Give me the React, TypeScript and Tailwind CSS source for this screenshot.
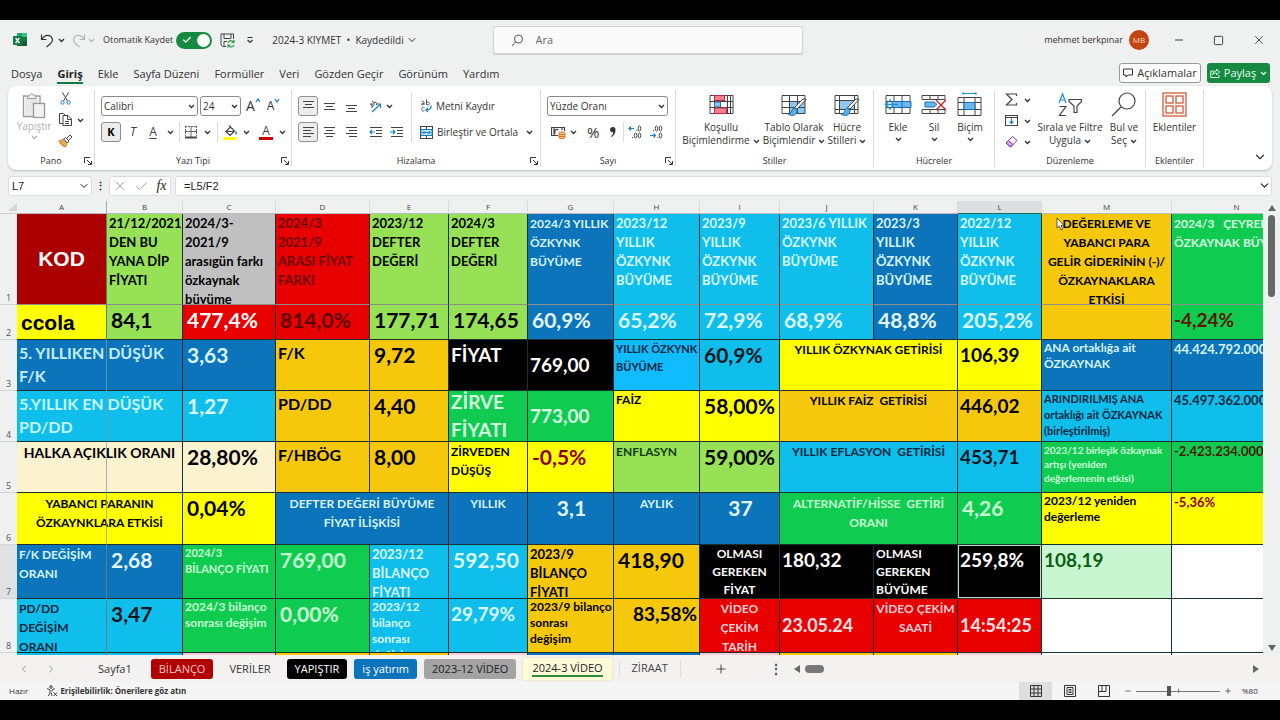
import type { ReactNode } from 'react'
import clsx from 'clsx'
import { ChevronDown, ChevronLeft, ChevronRight, Check, X, Minus, Plus, Square } from 'lucide-react'

/* ---------- sheet data ---------- */

interface Cell {
  t?:    string
  bg:    string
  c?:    string
  span?: number
}

interface Row {
  n:     number
  h:     string
  line?: string
  cells: Cell[]
}

// Fills
const LIME   = 'bg-[#96e155]'
const BLUE   = 'bg-[#0b74ba]'
const CYAN   = 'bg-[#10beec]'
const GOLD   = 'bg-[#f6c80c]'
const YELLOW = 'bg-[#ffff00]'
const GREEN  = 'bg-[#0fcc50]'
const RED    = 'bg-[#e80000]'
const BLACK  = 'bg-black'
const PINK   = 'bg-[#f3ccd5]'
const WHITE  = 'bg-white'

// Text sizes
const HEAD  = 'text-[13px] leading-[19px]'
const CAPS  = 'text-[12px] leading-[19px]'
const MID   = 'text-[12px] leading-[18px]'
const NOTE  = 'text-[12px] leading-[16px]'
const NOTE2 = 'text-[11px] leading-[16px]'
const TINY  = 'text-[10px] leading-[14px] pt-px'
const BIG   = 'text-[16px] leading-[23px] pt-px'
const NUM   = 'text-[21px] leading-[26px] pt-[2px] pl-1'
const NUM2  = 'text-[19px] leading-[24px] pt-[3px]'
const MIDV  = 'flex items-center'

const COLS = [
  ['A', 'w-[90px]'], ['B', 'w-[76px]'], ['C', 'w-[93px]'], ['D', 'w-[94px]'], ['E', 'w-[79px]'],
  ['F', 'w-[79px]'], ['G', 'w-[86px]'], ['H', 'w-[86px]'], ['I', 'w-[80px]'], ['J', 'w-[94px]'],
  ['K', 'w-[84px]'], ['L', 'w-[84px]'], ['M', 'w-[130px]'], ['N', 'w-[130px]'],
]

const ROWS: Row[] = [
  {
    n: 1, h: 'h-[90px]', line: 'border-b-[#8a8f8a]',
    cells: [
      { t: 'KOD', bg: 'bg-[#aa0000]', c: 'flex items-center justify-center font-[Liberation_Sans,sans-serif] text-[21px] text-white' },
      { t: '21/12/2021\nDEN BU\nYANA DİP\nFİYATI', bg: LIME, c: HEAD },
      { t: '2024/3-\n2021/9\narasıgün farkı\nözkaynak\nbüyüme', bg: 'bg-[#c0c0c0]', c: HEAD },
      { t: '2024/3\n2021/9\nARASI FİYAT\nFARKI', bg: RED, c: `${HEAD} text-[#6a0000]` },
      { t: '2023/12\nDEFTER\nDEĞERİ', bg: LIME, c: HEAD },
      { t: '2024/3\nDEFTER\nDEĞERİ', bg: LIME, c: HEAD },
      { t: '2024/3 YILLIK\nÖZKYNK\nBÜYÜME', bg: BLUE, c: `${CAPS} text-[#d8f4ff]` },
      { t: '2023/12\nYILLIK\nÖZKYNK\nBÜYÜME', bg: CYAN, c: `${HEAD} text-[#d8faff]` },
      { t: '2023/9\nYILLIK\nÖZKYNK\nBÜYÜME', bg: CYAN, c: `${HEAD} text-[#d8faff]` },
      { t: '2023/6 YILLIK\nÖZKYNK\nBÜYÜME', bg: CYAN, c: `${HEAD} text-[#d8faff]` },
      { t: '2023/3\nYILLIK\nÖZKYNK\nBÜYÜME', bg: BLUE, c: `${HEAD} text-[#d8f4ff]` },
      { t: '2022/12\nYILLIK\nÖZKYNK\nBÜYÜME', bg: CYAN, c: `${HEAD} text-[#d8faff]` },
      { t: 'DEĞERLEME VE\nYABANCI PARA\nGELİR GİDERİNİN (-)/\nÖZKAYNAKLARA\nETKİSİ', bg: GOLD, c: `${CAPS} text-center` },
      { t: '2024/3   ÇEYREK\nÖZKAYNAK BÜYÜME', bg: GREEN, c: `${CAPS} text-[#d8ffe0]` },
    ],
  },
  {
    n: 2, h: 'h-[34px]',
    cells: [
      { t: 'ccola', bg: YELLOW, c: 'flex items-center pl-1 pt-[2px] font-[Liberation_Sans,sans-serif] text-[21px]' },
      { t: '84,1', bg: LIME, c: NUM },
      { t: '477,4%', bg: RED, c: `${NUM} text-white` },
      { t: '814,0%', bg: RED, c: `${NUM} text-[#5a0000]` },
      { t: '177,71', bg: LIME, c: NUM },
      { t: '174,65', bg: LIME, c: NUM },
      { t: '60,9%', bg: BLUE, c: `${NUM} text-[#e4f8ff]` },
      { t: '65,2%', bg: CYAN, c: `${NUM} text-[#dcfaff]` },
      { t: '72,9%', bg: CYAN, c: `${NUM} text-[#dcfaff]` },
      { t: '68,9%', bg: CYAN, c: `${NUM} text-[#dcfaff]` },
      { t: '48,8%', bg: BLUE, c: `${NUM} text-[#e4f8ff]` },
      { t: '205,2%', bg: CYAN, c: `${NUM} text-[#dcfaff]` },
      { bg: GOLD },
      { t: '-4,24%', bg: GREEN, c: `${NUM2} text-[#5a1a00]` },
    ],
  },
  {
    n: 3, h: 'h-[50px]',
    cells: [
      { t: '5. YILLIKEN DÜŞÜK\nF/K', bg: BLUE, span: 2, c: `${BIG} text-[#c4ecff]` },
      { t: '3,63', bg: BLUE, c: `${NUM} text-[#d8f4ff]` },
      { t: 'F/K', bg: GOLD, c: BIG },
      { t: '9,72', bg: GOLD, c: NUM },
      { t: 'FİYAT', bg: BLACK, c: 'text-[19px] leading-[28px] pt-px text-white' },
      { t: '769,00', bg: BLACK, c: `text-[19px] ${MIDV} text-white` },
      { t: 'YILLIK ÖZKYNK\nBÜYÜME', bg: 'bg-[#10bbff]', c: 'text-[11px] leading-[18px] text-[#04263c]' },
      { t: '60,9%', bg: CYAN, c: `${NUM} text-[#04161c]` },
      { t: 'YILLIK ÖZKYNAK GETİRİSİ', bg: YELLOW, span: 2, c: `${CAPS} text-center` },
      { t: '106,39', bg: YELLOW, c: NUM2 },
      { t: 'ANA ortaklığa ait\nÖZKAYNAK', bg: BLUE, c: `${NOTE} text-[#d8f4ff]` },
      { t: '44.424.792.000', bg: BLUE, c: `${HEAD} text-[#d8f4ff]` },
    ],
  },
  {
    n: 4, h: 'h-[50px]',
    cells: [
      { t: '5.YILLIK EN DÜŞÜK\nPD/DD', bg: CYAN, span: 2, c: `${BIG} text-[#c4f6ff]` },
      { t: '1,27', bg: CYAN, c: `${NUM} text-[#d8faff]` },
      { t: 'PD/DD', bg: GOLD, c: BIG },
      { t: '4,40', bg: GOLD, c: NUM },
      { t: 'ZİRVE\nFİYATI', bg: GREEN, c: `text-[19px] leading-[28px] ${MIDV} text-[#d8ffe0]` },
      { t: '773,00', bg: GREEN, c: `text-[19px] ${MIDV} text-[#d8ffe0]` },
      { t: 'FAİZ', bg: YELLOW, c: MID },
      { t: '58,00%', bg: YELLOW, c: NUM },
      { t: 'YILLIK FAİZ  GETİRİSİ', bg: GOLD, span: 2, c: `${CAPS} text-center` },
      { t: '446,02', bg: GOLD, c: NUM2 },
      { t: 'ARINDIRILMIŞ ANA\nortaklığı ait ÖZKAYNAK\n(birleştirilmiş)', bg: CYAN, c: `${NOTE2} text-[#04263c]` },
      { t: '45.497.362.000', bg: CYAN, c: `${HEAD} text-[#04263c]` },
    ],
  },
  {
    n: 5, h: 'h-[50px]',
    cells: [
      { t: 'HALKA AÇIKLIK ORANI', bg: 'bg-[#fbf2d0]', span: 2, c: 'text-[14px] leading-[22px] text-center' },
      { t: '28,80%', bg: 'bg-[#fbf2d0]', c: NUM },
      { t: 'F/HBÖG', bg: GOLD, c: BIG },
      { t: '8,00', bg: GOLD, c: NUM },
      { t: 'ZİRVEDEN\nDÜŞÜŞ', bg: YELLOW, c: CAPS },
      { t: '-0,5%', bg: YELLOW, c: `${NUM} text-[#8a0000]` },
      { t: 'ENFLASYN', bg: LIME, c: `${CAPS} text-[#123a12]` },
      { t: '59,00%', bg: LIME, c: NUM },
      { t: 'YILLIK EFLASYON  GETİRİSİ', bg: CYAN, span: 2, c: `${CAPS} text-center text-[#04263c]` },
      { t: '453,71', bg: CYAN, c: `${NUM2} text-[#04161c]` },
      { t: '2023/12 birleşik özkaynak\nartışı (yeniden\ndeğerlemenin etkisi)', bg: GREEN, c: `${TINY} text-[#d0ffdc]` },
      { t: '-2.423.234.000', bg: GREEN, c: `${HEAD} text-[#4a1a00]` },
    ],
  },
  {
    n: 6, h: 'h-[51px]',
    cells: [
      { t: 'YABANCI PARANIN\nÖZKAYNKLARA ETKİSİ', bg: YELLOW, span: 2, c: `${CAPS} pt-px text-center` },
      { t: '0,04%', bg: YELLOW, c: NUM },
      { t: 'DEFTER DEĞERİ BÜYÜME\nFİYAT İLİŞKİSİ', bg: BLUE, span: 2, c: `${CAPS} pt-px text-center text-[#d8f4ff]` },
      { t: 'YILLIK', bg: BLUE, c: `${CAPS} pt-px text-center text-[#d8f4ff]` },
      { t: '3,1', bg: BLUE, c: `${NUM} text-center text-[#e4f8ff]` },
      { t: 'AYLIK', bg: BLUE, c: `${CAPS} pt-px text-center text-[#d8f4ff]` },
      { t: '37', bg: BLUE, c: `${NUM} text-center text-[#e4f8ff]` },
      { t: 'ALTERNATİF/HİSSE  GETİRİ\nORANI', bg: GREEN, span: 2, c: `${CAPS} pt-px text-center text-[#c8ffd4]` },
      { t: '4,26', bg: GREEN, c: `${NUM} text-[#c8ffd4]` },
      { t: '2023/12 yeniden\ndeğerleme', bg: YELLOW, c: NOTE },
      { t: '-5,36%', bg: YELLOW, c: `${HEAD} text-[#8a0000]` },
    ],
  },
  {
    n: 7, h: 'h-[53px]',
    cells: [
      { t: 'F/K DEĞİŞİM\nORANI', bg: BLUE, c: `${CAPS} text-[#d8f4ff]` },
      { t: '2,68', bg: BLUE, c: `${NUM} text-[#e4f8ff]` },
      { t: '2024/3\nBİLANÇO FİYATI', bg: GREEN, c: `${NOTE2} text-[#c8ffd4]` },
      { t: '769,00', bg: GREEN, c: `${NUM} text-[#c8ffd4]` },
      { t: '2023/12\nBİLANÇO\nFİYATI', bg: CYAN, c: `${HEAD} text-[#d8faff]` },
      { t: '592,50', bg: CYAN, c: `${NUM} text-[#dcfaff]` },
      { t: '2023/9\nBİLANÇO\nFİYATI', bg: GOLD, c: HEAD },
      { t: '418,90', bg: GOLD, c: NUM },
      { t: 'OLMASI\nGEREKEN\nFİYAT', bg: BLACK, c: `${MID} text-center text-white` },
      { t: '180,32', bg: BLACK, c: `${NUM2} text-white` },
      { t: 'OLMASI\nGEREKEN\nBÜYÜME', bg: BLACK, c: `${MID} text-white` },
      { t: '259,8%', bg: BLACK, c: `${NUM2} text-white` },
      { t: '108,19', bg: 'bg-[#c8f6d0]', c: `${NUM2} text-[#0a6010]` },
      { bg: WHITE },
    ],
  },
  {
    n: 8, h: 'h-[53px]',
    cells: [
      { t: 'PD/DD\nDEĞİŞİM\nORANI', bg: CYAN, c: `${CAPS} text-[#04263c]` },
      { t: '3,47', bg: CYAN, c: `${NUM} text-[#04161c]` },
      { t: '2024/3 bilanço\nsonrası değişim', bg: GREEN, c: `${NOTE} text-[#c8ffd4]` },
      { t: '0,00%', bg: GREEN, c: `${NUM} text-[#c8ffd4]` },
      { t: '2023/12\nbilanço\nsonrası\ndeğişim', bg: CYAN, c: `${NOTE} text-[#d8faff]` },
      { t: '29,79%', bg: CYAN, c: `${NUM2} text-[#d8faff]` },
      { t: '2023/9 bilanço\nsonrası\ndeğişim', bg: GOLD, c: NOTE },
      { t: '83,58%', bg: GOLD, c: `${NUM2} text-right` },
      { t: 'VİDEO\nÇEKİM\nTARİH', bg: RED, c: `${CAPS} text-center text-[#ffd0d8]` },
      { t: '23.05.24', bg: RED, c: `text-[18px] ${MIDV} text-[#ffe0e4]` },
      { t: 'VİDEO ÇEKİM\nSAATİ', bg: RED, c: `${CAPS} text-center text-[#ffd0d8]` },
      { t: '14:54:25', bg: RED, c: `text-[18px] ${MIDV} text-[#ffe0e4]` },
      { bg: WHITE },
      { bg: WHITE },
    ],
  },
  {
    n: 9, h: 'h-[20px]',
    cells: [CYAN, CYAN, PINK, GOLD, GOLD, PINK, BLUE, BLUE, PINK, GOLD, GOLD, PINK, WHITE, WHITE].map(bg => ({ bg })),
  },
]

const SHEETS = [
  { name: 'Sayfa1',        c: 'px-3 text-[#333]' },
  { name: 'BİLANÇO',       c: 'px-2 bg-[#b00000] text-[#ffc8c8]' },
  { name: 'VERİLER',       c: 'px-[9px] text-[#333]' },
  { name: 'YAPIŞTIR',      c: 'px-2 bg-black text-white' },
  { name: 'iş yatırım',    c: 'px-2 bg-[#0b74ba] text-white' },
  { name: '2023-12 VİDEO', c: 'px-2 bg-[#a3a3a3] text-[#222]' },
]

/* ---------- icons ---------- */

function Svg({ w, h, children }: { w: number; h: number; children: ReactNode }) {
  return (
    <svg width={w} height={h} viewBox={`0 0 ${w} ${h}`} fill="none" stroke="#444" strokeWidth="1" className="shrink-0">
      {children}
    </svg>
  )
}

const Down = ({ c = 'text-[#333]' }: { c?: string }) => (
  <svg width="7" height="8" viewBox="0 0 7 8" fill="none" stroke="currentColor" strokeWidth="1.300" className={`shrink-0 ${c}`}>
    <path d="M1 3l2.500 2.500L6 3" />
  </svg>
)

const ExcelIcon = () => (
  <svg width="15" height="14" viewBox="0 0 15 14">
    <rect x="4" y="0" width="10" height="13" rx="1" fill="#21a366" />
    <path d="M9 0h4a1 1 0 0 1 1 1v3H9z" fill="#33c481" />
    <path d="M4 7h10v5a1 1 0 0 1-1 1H5a1 1 0 0 1-1-1z" fill="#185c37" />
    <path d="M9 4h5v4H9z" fill="#107c41" />
    <rect x="0" y="3" width="9" height="9" rx="1" fill="#0f7a3d" />
    <path d="M2.600 5l3.800 5M6.400 5L2.600 10" stroke="#fff" strokeWidth="1.300" />
  </svg>
)

const UndoIcon = () => (
  <Svg w={14} h={15}><path d="M1.500 1.500v5h5M1.800 6.200C4 2.500 8 1.300 10.800 3.500c2.500 2.200 2 5-.2 7L6.500 14" strokeWidth="1.200" stroke="#333" /></Svg>
)

const RedoIcon = () => (
  <Svg w={14} h={15}><path d="M12.500 1.500v5h-5M12.200 6.200C10 2.500 6 1.300 3.200 3.500c-2.500 2.200-2 5 .2 7L7.500 14" strokeWidth="1.200" stroke="#b5b5b5" /></Svg>
)

const SaveIcon = () => (
  <Svg w={15} h={15}>
    <path d="M6 13.500H2.500L1 12V1h12.500v5M4 1v4.500h7V1M4 13.500V8.500h3" />
    <path d="M8 10a3 3 0 0 1 5.500-1M14 7v2.500h-2.500M14 11.500a3 3 0 0 1-5.500 1M8 14.500V12h2.500" stroke="#2a9d4a" strokeWidth="1.200" />
  </Svg>
)

const PasteIcon = () => (
  <Svg w={24} h={26}>
    <path d="M3 5h13v6h-5v11H3z" fill="#e8e8e8" stroke="none" />
    <path d="M5 3H1.500v20.500H11M14 3h4v7" stroke="#999" strokeWidth="1.300" />
    <path d="M5.500 5.500V2.800h2.200a2 2 0 0 1 4 0h2.200v2.700z" fill="#f4f4f4" stroke="#999" />
    <rect x="11.500" y="10.500" width="11" height="14" fill="#f2f2f2" stroke="#999" strokeWidth="1.300" />
  </Svg>
)

const CutIcon = () => (
  <Svg w={11} h={13}>
    <path d="M2.500 0.500l5 8.500M8.500 0.500l-5 8.500" />
    <circle cx="2.500" cy="10.500" r="1.700" stroke="#1a7fc4" /><circle cx="8.500" cy="10.500" r="1.700" stroke="#1a7fc4" />
  </Svg>
)

const CopyIcon = () => (
  <Svg w={15} h={15}>
    <path d="M5 11.500H1.500V1.500h4l1.500 1.500M5 3.500h5l3.500 3.500v6.500H5zM9.500 3.500V7.500h4M7 9.500h4M7 11.500h4" />
  </Svg>
)

const BrushIcon = () => (
  <Svg w={15} h={14}>
    <path d="M1 7l4-1.500 4 4L7.500 13C5 12.500 2 10 1 7z" fill="#f2b266" stroke="#d07a1c" />
    <path d="M5.500 5l2-1.500L11 7 9.500 9zM8.500 4.500L12 1l2 2-3.500 3.500" />
    <path d="M3 9l2-1M5 11l1.500-1.500" stroke="#d07a1c" />
  </Svg>
)

const GlyphA = ({ up }: { up: boolean }) => (
  <span className="flex items-start text-[#333]">
    <span className={up ? 'text-[14px] leading-[16px]' : 'text-[12px] leading-[16px]'}>A</span>
    <svg width="6" height="5" viewBox="0 0 6 5" fill="none" stroke="#1a7fc4" strokeWidth="1.200">
      <path d={up ? 'M1 4l2-3 2 3' : 'M1 1l2 3 2-3'} />
    </svg>
  </span>
)

const BordersIcon = () => (
  <Svg w={14} h={14}>
    <path d="M1 1.500h12M1.500 1v10M12.500 1v10" strokeDasharray="2 1" stroke="#666" />
    <path d="M7 1v11M1 6.500h12" stroke="#666" />
    <path d="M1 12.500h12" strokeWidth="2" />
  </Svg>
)

const FillIcon = () => (
  <Svg w={15} h={15}>
    <path d="M3 6.500L7.500 2l4 4-4.500 4.500zM7.500 2L6 0.500M3.500 6.500h7.500" strokeWidth="1.200" />
    <path d="M12.500 6.500c1 1.500 1.200 2.200.3 2.800" stroke="#1a7fc4" strokeWidth="1.400" />
    <rect x="0.500" y="12" width="13" height="3" fill="#ffff00" stroke="none" />
  </Svg>
)

// Horizontal rules as [x1, x2, y]
function Lines({ rows }: { rows: [number, number, number][] }) {
  return (
    <Svg w={13} h={13}>
      {rows.map(([x1, x2, y]) => <path key={y} d={`M${x1} ${y + 0.5}h${x2 - x1}`} />)}
    </Svg>
  )
}

const OrientIcon = () => (
  <Svg w={14} h={13}>
    <path d="M3 7a1.600 1.600 0 1 0-.5-2.500M4.500 6.500L2.500 3.500M6.500 4.500L4 .8M6 3a1.500 1.500 0 1 1 2 2" />
    <path d="M4 12l8.500-8M12.500 8V4H9" stroke="#1a7fc4" strokeWidth="1.200" />
  </Svg>
)

function IndentIcon({ right }: { right?: boolean }) {
  return (
    <Svg w={13} h={13}>
      <path d="M1 1.500h12M7 4.500h6M7 7.500h6M1 10.500h12" />
      <path d={right ? 'M0 6h5M3 4l2 2-2 2' : 'M6 6H1M3 4L1 6l2 2'} stroke="#1a7fc4" strokeWidth="1.200" />
    </Svg>
  )
}

const WrapIcon = () => (
  <svg width="12" height="14" viewBox="0 0 12 14" fill="none" stroke="#555">
    <path d="M1.500 2.500c1.500-.8 2.500 0 2.500 1v2.500M4 4.500c-2-.2-3 .3-2.500 1.200.5.7 2 .4 2.500-.5M6.500.5V6M6.500 4a1.500 1.500 0 1 1 0 1M4.500 9C3 8 1.300 9 1.500 10.500s2 2 3 1" />
    <path d="M11 6.500c.5 3-1 4.500-5 4.500M8 9l-2 2 2 2" stroke="#1a7fc4" strokeWidth="1.200" />
  </svg>
)

const MergeIcon = () => (
  <Svg w={13} h={13}>
    <rect x="0.500" y="0.500" width="12" height="12" />
    <rect x="1" y="3.500" width="11" height="6" fill="#bfe2f8" stroke="#1a7fc4" />
    <path d="M6.500 .5v3M6.500 9.500v3" /><path d="M2.500 6.500h8M4.500 5L3 6.500 4.500 8M8.500 5L10 6.500 8.500 8" stroke="#1a7fc4" />
  </Svg>
)

const MoneyIcon = () => (
  <Svg w={15} h={13}>
    <path d="M7 9.500H.5v-8h13V5M3 1.500v8M4.500 7.500a2 2 0 1 1 3-3.500M11 1.500V4" strokeWidth="1.200" />
    <rect x="8" y="6" width="6" height="6.500" rx="1.500" fill="#f8c48a" stroke="#d8741c" /><path d="M8 8.500h6M8 10.500h6" stroke="#d8741c" />
  </Svg>
)

function DecimalIcon({ inc }: { inc?: boolean }) {
  return (
    <svg width="15" height="14" viewBox="0 0 15 14" fill="none" stroke="#444">
      <path d={inc ? 'M6 3.500H1M3 1.500l-2 2 2 2' : 'M1 10.500h5.500M4.500 8.500l2 2-2 2'} stroke="#1a7fc4" strokeWidth="1.200" />
      {inc
        ? <><ellipse cx="11.500" cy="3.500" rx="1.300" ry="2.500" /><ellipse cx="7.500" cy="10.500" rx="1.300" ry="2.500" /><ellipse cx="11.500" cy="10.500" rx="1.300" ry="2.500" /></>
        : <><ellipse cx="7.500" cy="3.500" rx="1.300" ry="2.500" /><ellipse cx="11.500" cy="3.500" rx="1.300" ry="2.500" /><ellipse cx="11.500" cy="10.500" rx="1.300" ry="2.500" /></>}
      <path d={inc ? 'M4 12.500h1M8.500 5.500h1' : 'M4 5.500h1M8.500 12.500h1'} />
    </svg>
  )
}

const CondIcon = () => (
  <Svg w={25} h={25}>
    <path d="M1 3.500h23v18H1zM1 9.500h23M1 15.500h23M5.500 3.500v18M18.500 3.500v18M21.500 3.500v18" />
    <rect x="5.500" y="3.500" width="10" height="5" fill="#f4808e" stroke="#c8283c" />
    <rect x="5.500" y="10" width="6" height="5" fill="#8cc4ec" stroke="#2a6cb0" />
    <rect x="5.500" y="16" width="12" height="5.500" fill="#f4808e" stroke="#c8283c" />
  </Svg>
)

const TableFmtIcon = () => (
  <Svg w={26} h={25}>
    <path d="M8 9.500h16v12H8z" fill="#8cc8f2" stroke="none" />
    <path d="M1 3.500h23v18H1zM1 9.500h23M1 15.500h23M8.500 3.500v18M16.500 3.500v18" />
    <path d="M25 7.500L16 17l-2.500-1.500L22 7z" fill="#fff" />
    <path d="M13.500 16c-3 .5-2 4.500-6 6.500 4 2 9 .5 8.500-4z" fill="#5ab0ea" stroke="#1a6cb0" />
  </Svg>
)

const CellStyleIcon = () => (
  <Svg w={26} h={25}>
    <path d="M5 8.500h16v9H5z" fill="#8cc8f2" stroke="none" />
    <path d="M1 3.500h23v18H1zM1 8.500h23M1 17.500h23M5.500 3.500v18M20.500 3.500v18" />
    <path d="M25 7.500L16 17l-2.500-1.500L22 7z" fill="#fff" />
    <path d="M13.500 16c-3 .5-2 4.500-6 6.500 4 2 9 .5 8.500-4z" fill="#5ab0ea" stroke="#1a6cb0" />
  </Svg>
)

const InsertIcon = () => (
  <Svg w={28} h={25}>
    <path d="M2 3.500h24v18H2zM2 9.500h24M2 15.500h24M10 3.500v18M18 3.500v18" />
    <path d="M8 9.500h19v6H8z" fill="#6cb8ee" stroke="#1a6cb0" /><path d="M18 9.500v6" stroke="#1a6cb0" />
    <path d="M14 12.500H1.500M7 7.500l-5.500 5 5.500 5" stroke="#1a8fd4" strokeWidth="1.300" />
  </Svg>
)

const DeleteIcon = () => (
  <Svg w={26} h={25}>
    <path d="M1 3.500h23v4M1 3.500v4h23M1 21.500h23v-4H1zM9 3.500v4M17 3.500v4M9 17.500v4M17 17.500v4" />
    <path d="M4 10h9l3 2.500-3 2.500H4z" fill="#6cb8ee" stroke="#1a6cb0" />
    <path d="M15 8l10 10M25 8L15 18" stroke="#d0202c" strokeWidth="1.400" />
  </Svg>
)

const FormatIcon = () => (
  <Svg w={26} h={25}>
    <path d="M6 1.500h13M6 0v3M19 0v3" stroke="#1a8fd4" />
    <path d="M1 5.500h23v18H1zM1 10.500h23M1 17.500h23M7 5.500v18M18 5.500v18" />
    <rect x="7" y="10.500" width="11" height="7" fill="#6cb8ee" stroke="#1a6cb0" />
  </Svg>
)

const SortIcon = () => (
  <Svg w={26} h={25}>
    <path d="M2 11L5.500 2 9 11M3 8h5" stroke="#1a8fd4" strokeWidth="1.200" />
    <path d="M2.500 14.500h6.500L2.500 23.500H9" strokeWidth="1.200" />
    <path d="M12 7.500h12.500v2L20 14v6.500h-3V14l-5-4.500z" strokeWidth="1.200" />
  </Svg>
)

const FindIcon = () => (
  <Svg w={26} h={25}><circle cx="16" cy="9" r="8" strokeWidth="1.200" /><path d="M10 15L1 24" strokeWidth="1.200" /></Svg>
)

const AddinsIcon = () => (
  <Svg w={25} h={25}>
    <g stroke="#d05a38" strokeWidth="1.300">
      <rect x="1" y="1" width="23" height="23" />
      <rect x="4" y="4" width="7" height="7" /><rect x="14" y="4" width="7" height="7" />
      <rect x="4" y="14" width="7" height="7" /><rect x="14" y="14" width="7" height="7" />
    </g>
  </Svg>
)

/* ---------- ribbon parts ---------- */

function Group({ label, w, launcher, children }: { label: string; w: string; launcher?: boolean; children: ReactNode }) {
  return (
    <section aria-label={label} className={`relative flex shrink-0 flex-col justify-between border-r border-[#dcdcdc] ${w}`}>
      <div className="flex h-[60px] items-start pt-[2px]">{children}</div>
      <div className="text-center text-[9px] leading-3 text-[#333]">{label}</div>
      {launcher && (
        <button aria-label={`${label} ayarları`} className="absolute bottom-[2px] right-[2px]">
          <Svg w={8} h={8}><path d="M.5 6V.5H6M3 3l4 4M7.500 4v3.500H4" stroke="#333" /></Svg>
        </button>
      )}
    </section>
  )
}

function BigButton({ icon, lines, w, below }: { icon: ReactNode; lines: string[]; w: string; below?: boolean }) {
  return (
    <button className={`flex flex-col items-center whitespace-nowrap text-[10px] leading-[13px] text-[#333] ${w}`}>
      {icon}
      {lines.map((l, i) => (
        <span key={l} className={clsx('flex items-center gap-[3px]', i === 0 && 'mt-1')}>
          {l}{!below && i === 1 && <Down />}
        </span>
      ))}
      {below && <span className="mt-px"><Down /></span>}
    </button>
  )
}

function Picker({ label, value, w }: { label: string; value: string; w: string }) {
  return (
    <div className={`relative ${w}`}>
      <select aria-label={label} className="block h-5 w-full appearance-none rounded-[3px] border border-[#8a8a8a] bg-white pl-[2px] text-[10px] text-[#333]">
        <option>{value}</option>
      </select>
      <span className="pointer-events-none absolute right-[3px] top-[6px]"><Down /></span>
    </div>
  )
}

const Sep = () => <span className="block h-5 w-px bg-[#dcdcdc]" />

function Ribbon() {
  const on = 'flex size-5 items-center justify-center rounded-[3px] border border-[#8f8f8f] bg-[#ececec]'
  const off = 'flex h-5 items-center justify-center'
  return (
    <div className="mx-2 flex h-[84px] shrink-0 rounded-lg bg-white pb-[3px] pt-1 shadow-[0_1px_2px_#bbb]">
      <Group label="Pano" w="w-[87px]" launcher>
        <button className="ml-2 flex w-9 flex-col items-center pt-px text-[10px] leading-[14px] text-[#b0b0b0]">
          <PasteIcon />Yapıştır<Down c="text-[#b0b0b0]" />
        </button>
        <div className="ml-[6px] flex flex-col items-start gap-[7px]">
          <button aria-label="Kes" className="pl-[2px]"><CutIcon /></button>
          <div className="flex gap-1">
            <button aria-label="Kopyala"><CopyIcon /></button>
            <button aria-label="Kopyalama seçenekleri"><Down /></button>
          </div>
          <button aria-label="Biçim Boyacısı"><BrushIcon /></button>
        </div>
      </Group>

      <Group label="Yazı Tipi" w="w-[197px]" launcher>
        <div className="flex flex-1 flex-col gap-[6px] pl-[6px] pt-1">
          <div className="flex items-center gap-[2px]">
            <Picker label="Yazı tipi" value="Calibri" w="w-[97px]" />
            <Picker label="Yazı boyutu" value="24" w="w-[41px]" />
            <button aria-label="Büyüt" className="ml-[3px]"><GlyphA up /></button>
            <button aria-label="Küçült" className="ml-1"><GlyphA up={false} /></button>
          </div>
          <div className="flex items-center">
            <button className={`${on} text-[11px] font-bold`}>K</button>
            <button className={`${off} w-6 text-[12px] italic text-[#444]`}>T</button>
            <button className={`${off} w-4 text-[12px] text-[#444] underline underline-offset-2`}>A</button>
            <button aria-label="Altı çizili" className={`${off} w-[18px]`}><Down /></button>
            <Sep />
            <button className={`${off} ml-px w-5`} aria-label="Kenarlıklar"><BordersIcon /></button>
            <button className={`${off} w-3`} aria-label="Kenarlık seçenekleri"><Down /></button>
            <span className="w-1" />
            <Sep />
            <button className={`${off} w-6`} aria-label="Dolgu rengi"><FillIcon /></button>
            <button className={`${off} w-2`} aria-label="Dolgu seçenekleri"><Down /></button>
            <button className={`${off} ml-2 w-4 flex-col text-[12px] leading-3 text-[#444]`} aria-label="Yazı rengi">
              A<span className="h-[3px] w-[14px] bg-[#d00000]" />
            </button>
            <button className={`${off} ml-[2px] w-3`} aria-label="Yazı rengi seçenekleri"><Down /></button>
          </div>
        </div>
      </Group>

      <Group label="Hizalama" w="w-[249px]" launcher>
        <div className="flex flex-col gap-[6px] pl-[6px] pt-1">
          <div className="flex items-center">
            <button aria-label="Üste hizala" className={on}><Lines rows={[[1, 12, 1], [3, 10, 4], [1, 12, 7]]} /></button>
            <button aria-label="Ortala dikey" className={`${off} w-[22px]`}><Lines rows={[[1, 12, 3], [3, 10, 6], [1, 12, 9]]} /></button>
            <button aria-label="Alta hizala" className={`${off} mr-[5px] w-[22px]`}><Lines rows={[[1, 12, 5], [3, 10, 8], [1, 12, 11]]} /></button>
            <button aria-label="Yönlendirme" className={`${off} w-4`}><OrientIcon /></button>
            <button aria-label="Yönlendirme seçenekleri" className={`${off} ml-[2px] w-2`}><Down /></button>
          </div>
          <div className="flex items-center">
            <button aria-label="Sola hizala" className={on}><Lines rows={[[1, 12, 1], [1, 9, 4], [1, 12, 7], [1, 9, 10]]} /></button>
            <button aria-label="Ortala" className={`${off} w-[22px]`}><Lines rows={[[1, 12, 1], [3, 10, 4], [1, 12, 7], [3, 10, 10]]} /></button>
            <button aria-label="Sağa hizala" className={`${off} mr-[5px] w-[22px]`}><Lines rows={[[1, 12, 1], [4, 12, 4], [1, 12, 7], [4, 12, 10]]} /></button>
            <button aria-label="Girintiyi azalt" className={`${off} w-4`}><IndentIcon /></button>
            <button aria-label="Girintiyi artır" className={`${off} ml-[5px] w-4`}><IndentIcon right /></button>
          </div>
        </div>
        <div className="ml-[7px] flex flex-1 flex-col gap-[6px] border-l border-[#dcdcdc] pl-2 pt-1 text-[10px] text-[#333]">
          <button className="flex h-5 items-center gap-1"><WrapIcon />Metni Kaydır</button>
          <div className="flex h-5 items-center">
            <button className="flex items-center gap-1 whitespace-nowrap"><MergeIcon />Birleştir ve Ortala</button>
            <button aria-label="Birleştirme seçenekleri" className="ml-2"><Down /></button>
          </div>
        </div>
      </Group>

      <Group label="Sayı" w="w-[135px]" launcher>
        <div className="flex flex-1 flex-col gap-[6px] pl-[6px] pt-1">
          <Picker label="Sayı biçimi" value="Yüzde Oranı" w="w-[121px]" />
          <div className="flex h-5 items-center pl-1">
            <button aria-label="Finansal biçim"><MoneyIcon /></button>
            <button aria-label="Finansal seçenekler" className="ml-1"><Down /></button>
            <button className="ml-[10px] text-[15px] text-[#333]">%</button>
            <button aria-label="Binlik ayırıcı" className="ml-[10px]">
              <svg width="8" height="12" viewBox="0 0 8 12"><path d="M1 3.500a2.600 2.600 0 1 1 5.500.5c0 3-1.500 5.500-4 7l-.5-.8C3.500 9 4.300 7.500 4.200 6.200 2.500 6.600 1 5.200 1 3.500z" fill="#333" /></svg>
            </button>
            <span className="ml-[6px]"><Sep /></span>
            <button aria-label="Ondalık artır" className="ml-1"><DecimalIcon inc /></button>
            <button aria-label="Ondalık azalt" className="ml-[6px]"><DecimalIcon /></button>
          </div>
        </div>
      </Group>

      <Group label="Stiller" w="w-[198px]">
        <BigButton icon={<CondIcon />} lines={['Koşullu', 'Biçimlendirme']} w="ml-[6px] w-[78px]" />
        <BigButton icon={<TableFmtIcon />} lines={['Tablo Olarak', 'Biçimlendir']} w="ml-[2px] w-[64px]" />
        <BigButton icon={<CellStyleIcon />} lines={['Hücre', 'Stilleri']} w="w-[42px]" />
      </Group>

      <Group label="Hücreler" w="w-[121px]">
        <BigButton icon={<InsertIcon />} lines={['Ekle']} w="ml-2 w-8" below />
        <BigButton icon={<DeleteIcon />} lines={['Sil']} w="ml-1 w-8" below />
        <BigButton icon={<FormatIcon />} lines={['Biçim']} w="ml-1 w-8" below />
      </Group>

      <Group label="Düzenleme" w="w-[151px]">
        <div className="ml-[10px] flex w-7 flex-col gap-2 pt-px">
          <button aria-label="Otomatik toplam" className="flex items-center gap-[6px]">
            <Svg w={13} h={13}><path d="M11.500 3V1H1.500L7 6.500 1.500 12h10v-2" strokeWidth="1.200" /></Svg><Down />
          </button>
          <button aria-label="Doldur" className="flex items-center gap-[6px]">
            <Svg w={13} h={13}><rect x=".5" y="1.500" width="12" height="10" /><path d="M.5 3.500h12" /><path d="M6.500 4.500v5M4.500 7.500l2 2 2-2" stroke="#1a7fc4" strokeWidth="1.200" /></Svg><Down />
          </button>
          <button aria-label="Temizle" className="flex items-center gap-[6px]">
            <Svg w={13} h={13}><path d="M1 8l6.500-6.500L12 5.500 5.500 12z" stroke="#8a2ca8" /><path d="M1 8l2.500-2.500L8 9.500 5.500 12z" fill="#d8a0e8" stroke="#8a2ca8" /></Svg><Down />
          </button>
        </div>
        <BigButton icon={<SortIcon />} lines={['Sırala ve Filtre', 'Uygula']} w="ml-1 w-[66px]" />
        <BigButton icon={<FindIcon />} lines={['Bul ve', 'Seç']} w="ml-[5px] w-8" />
      </Group>

      <Group label="Eklentiler" w="w-[58px]">
        <BigButton icon={<AddinsIcon />} lines={['Eklentiler']} w="w-full" />
      </Group>

      <div className="flex flex-1 items-end justify-end pb-[3px] pr-[5px]">
        <button aria-label="Şeridi daralt"><ChevronDown size={14} className="text-[#333]" /></button>
      </div>
    </div>
  )
}

/* ---------- window bars ---------- */

function TitleBar() {
  return (
    <header className="flex h-10 shrink-0 items-center pl-[13px] text-[10px] text-[#333]">
      <div className="flex min-w-0 flex-1 items-center">
        <ExcelIcon />
        <button aria-label="Geri al" className="ml-3"><UndoIcon /></button>
        <button aria-label="Geri alma listesi" className="ml-1"><Down /></button>
        <button aria-label="Yinele" className="ml-[7px]"><RedoIcon /></button>
        <button aria-label="Yineleme listesi" className="ml-[2px]"><Down c="text-[#bbb]" /></button>
        <label className="ml-2 flex items-center gap-[3px] whitespace-nowrap text-[9px]">
          Otomatik Kaydet
          <input type="checkbox" defaultChecked className="peer sr-only" />
          <span className="flex h-[17px] w-9 items-center justify-between rounded-full bg-[#178a42] pl-[6px] pr-[2px]">
            <Check size={10} strokeWidth={3} className="text-white" />
            <span className="size-[13px] rounded-full bg-white" />
          </span>
        </label>
        <button aria-label="Kaydet" className="ml-2"><SaveIcon /></button>
        <button aria-label="Hızlı erişim" className="ml-[11px]">
          <Svg w={8} h={8}><path d="M1.500 1.500h5M1.500 4l2.500 2.500L6.500 4" stroke="#333" strokeWidth="1.200" /></Svg>
        </button>
        <button className="ml-[18px] flex items-center gap-[2px] whitespace-nowrap">
          2024-3 KIYMET&nbsp;&nbsp;•&nbsp;&nbsp;Kaydedildi <ChevronDown size={12} />
        </button>
      </div>

      <label className="ml-4 flex h-7 w-[310px] items-center gap-3 rounded-[3px] border border-[#d4d4d4] bg-[#fafafa] px-[17px] shadow-[0_1px_1px_#ccc]">
        <Svg w={13} h={13}><circle cx="7.500" cy="5" r="4" stroke="#555" /><path d="M4.500 8L1 12" stroke="#555" /></Svg>
        <input type="search" placeholder="Ara" aria-label="Ara" className="w-full bg-transparent text-[11px] outline-none placeholder:text-[#666]" />
      </label>

      <div className="flex flex-1 items-center justify-end pr-[14px]">
        <span className="text-[9px]">mehmet berkpınar</span>
        <span className="ml-[6px] flex size-5 items-center justify-center rounded-full bg-[#c24410] text-[8px] text-[#ffd9c4]">MB</span>
        <button aria-label="Simge durumuna küçült" className="ml-6"><Minus size={12} strokeWidth={2} /></button>
        <button aria-label="Ekranı kapla" className="ml-7"><Square size={11} strokeWidth={2} /></button>
        <button aria-label="Kapat" className="ml-7"><X size={14} strokeWidth={1.5} /></button>
      </div>
    </header>
  )
}

function MenuBar() {
  const items = ['Dosya', 'Giriş', 'Ekle', 'Sayfa Düzeni', 'Formüller', 'Veri', 'Gözden Geçir', 'Görünüm', 'Yardım']
  return (
    <nav className="flex h-[26px] shrink-0 items-center justify-between pl-[11px] pr-[10px] text-[11px] text-[#333]">
      <div className="flex gap-[15px] pt-1">
        {items.map(i => (
          <button key={i} className={clsx('border-b-2 leading-[16px]', i === 'Giriş' ? 'border-[#107c41] font-bold text-[#222]' : 'border-transparent')}>
            {i}
          </button>
        ))}
      </div>
      <div className="flex gap-[6px]">
        <button className="flex h-5 w-[82px] items-center justify-center gap-1 rounded-[3px] border border-[#999] bg-white">
          <Svg w={10} h={10}><path d="M.5 1h9v6H5L3 9V7H.5z" stroke="#333" /></Svg>Açıklamalar
        </button>
        <button className="flex h-5 w-[63px] items-center justify-center gap-1 rounded-[3px] bg-[#178a42] text-[#e4ffee]">
          <Svg w={10} h={10}><path d="M4 3H.8v6.500H9V7M2.500 6.500C3 4 5 3 6.500 3V1l3 3-3 3V5C5 5 3.500 5.300 2.500 6.500z" stroke="#d8ffe6" /></Svg>Paylaş<Down c="text-[#d8ffe6]" />
        </button>
      </div>
    </nav>
  )
}

function FormulaBar() {
  return (
    <div className="mx-2 mb-[5px] mt-[6px] flex h-5 shrink-0 items-center font-[Liberation_Sans,sans-serif] text-[11px] text-[#222]">
      <div className="relative w-[84px]">
        <input aria-label="Ad kutusu" defaultValue="L7" className="block h-5 w-full rounded-[3px] border border-[#dcdcdc] bg-white pl-[3px]" />
        <ChevronDown size={12} className="absolute right-[2px] top-[4px]" />
      </div>
      <span className="flex w-[17px] justify-center font-bold">⋮</span>
      <div className="flex h-5 w-[62px] items-center justify-around rounded-[3px] border border-[#dcdcdc] bg-white">
        <button aria-label="İptal"><X size={14} strokeWidth={1.5} className="text-[#999]" /></button>
        <button aria-label="Gir"><Check size={15} strokeWidth={1.5} className="text-[#999]" /></button>
        <button className="font-[Liberation_Serif,serif] text-[14px] italic leading-4">fx</button>
      </div>
      <div className="relative ml-1 flex-1">
        <input aria-label="Formül çubuğu" defaultValue="=L5/F2" className="block h-5 w-full rounded-[3px] border border-[#dcdcdc] bg-white pl-2" />
        <ChevronDown size={13} className="absolute right-px top-[3px]" />
      </div>
    </div>
  )
}

function Sheet() {
  return (
    <div className="flex min-h-0 flex-1">
      <div className="relative min-w-0 flex-1 overflow-hidden">
        <table className="w-[1302px] table-fixed border-separate border-spacing-0 font-[Lato,sans-serif] font-bold">
          <colgroup>
            <col className="w-[17px]" />
            {COLS.map(([name, w]) => <col key={name} className={w} />)}
          </colgroup>
          <thead>
            <tr className="h-[13px] text-[8px] leading-[12px] text-[#444]">
              <th className="border-b border-[#ccc] p-0">
                <svg width="9" height="8" viewBox="0 0 9 8" className="ml-auto"><path d="M9 0v8H0z" fill="#d4d4d4" /></svg>
              </th>
              {COLS.map(([name]) => (
                <th key={name} scope="col" className={clsx('border-b border-r border-r-[#dadada] p-0 font-[Open_Sans,sans-serif] font-medium', name === 'L' ? 'border-b-[#1f6b45] bg-[#dcdfdf]' : 'border-b-[#bbb]')}>
                  {name}
                </th>
              ))}
            </tr>
          </thead>
          <tbody>
            {ROWS.map(r => (
              <tr key={r.n}>
                <th scope="row" className={clsx('border-b border-[#d4d4d4] p-0 pb-px align-bottom font-[Open_Sans,sans-serif] text-[9px] font-medium leading-[11px] text-[#555]', r.n === 7 && 'bg-[#dfe2e2]')}>
                  {r.n < 9 && r.n}
                </th>
                {r.cells.map((cell, i) => (
                  <td key={i} colSpan={cell.span} className={clsx('border-b border-r border-r-[#1c3030] p-0', r.line ?? 'border-b-[#1c3030]', cell.bg)}>
                    <div className={clsx('relative overflow-hidden whitespace-pre px-[2px]', r.h, cell.c)}>
                      {cell.t}
                      {cell.t === '259,8%' && <span className="absolute inset-0 border border-[#b8e0c4]" />}
                    </div>
                  </td>
                ))}
              </tr>
            ))}
          </tbody>
        </table>
        {/* Frozen column edge */}
        <span className="absolute inset-y-0 left-[106px] w-px bg-[#8a9a9a]/70" />
        {/* Mouse pointer */}
        <svg width="9" height="14" viewBox="0 0 9 14" className="absolute left-[1056px] top-[16px]">
          <path d="M1 1v10l2.300-2L5 13l1.700-.8L5 8.500h3z" fill="#fff" stroke="#333" strokeWidth=".8" />
        </svg>
      </div>

      {/* Vertical scroll bar */}
      <div className="flex w-[17px] flex-col items-center justify-between py-1">
        <div className="flex flex-col items-center gap-1">
          <svg width="8" height="6" viewBox="0 0 8 6"><path d="M4 0l4 6H0z" fill="#666" /></svg>
          <span className="h-[82px] w-[7px] rounded-full bg-[#666]" />
        </div>
        <svg width="8" height="6" viewBox="0 0 8 6"><path d="M4 6L0 0h8z" fill="#666" /></svg>
      </div>
    </div>
  )
}

function SheetTabs() {
  return (
    <div className="flex h-[27px] shrink-0 items-center bg-[#f3f2f1] text-[11px]">
      <button aria-label="Önceki sayfa" className="ml-[18px]"><ChevronLeft size={12} className="text-[#999]" /></button>
      <button aria-label="Sonraki sayfa" className="ml-[15px]"><ChevronRight size={12} className="text-[#999]" /></button>
      <div className="ml-[29px] flex items-center gap-[7px]">
        {SHEETS.map(s => (
          <button key={s.name} className={`h-5 whitespace-nowrap rounded-[3px] leading-5 ${s.c}`}>{s.name}</button>
        ))}
        <button className="h-[22px] whitespace-nowrap rounded-[3px] bg-[#fffbd8] px-[9px] shadow-[0_0_3px_#ddd8a8]">
          <span className="border-b-2 border-[#2e8b3a] text-[#222]">2024-3 VİDEO</span>
        </button>
        <button className="border-x border-[#ddd] px-3 text-[#444]">ZİRAAT</button>
      </div>
      <button aria-label="Yeni sayfa" className="ml-[33px]"><Plus size={14} strokeWidth={1.5} className="text-[#333]" /></button>
      <span className="ml-[42px] text-[12px] font-bold text-[#444]">⋮</span>
      <div className="ml-3 mr-[21px] flex flex-1 items-center justify-between">
        <div className="flex items-center gap-[5px]">
          <svg width="6" height="8" viewBox="0 0 6 8"><path d="M0 4l6-4v8z" fill="#666" /></svg>
          <span className="h-2 w-[19px] rounded-full bg-[#777]" />
        </div>
        <svg width="6" height="8" viewBox="0 0 6 8"><path d="M6 4L0 0v8z" fill="#666" /></svg>
      </div>
    </div>
  )
}

function StatusBar() {
  return (
    <footer className="flex h-[18px] shrink-0 items-center justify-between bg-[#f5f5f5] pl-[9px] pr-5 text-[8px] text-[#333]">
      <div className="flex items-center">
        <span>Hazır</span>
        <button className="ml-[18px] flex items-center gap-[2px] font-bold">
          <Svg w={12} h={12}>
            <circle cx="5" cy="2" r="1.300" /><path d="M1 3.500L4 5v2.500L2.500 11M9 3.500L6 5v1.500M5 7.500l1 3.500" />
            <path d="M7.500 7.500l3.500 3.500M11 7.500L7.500 11" />
          </Svg>
          Erişilebilirlik: Önerilere göz atın
        </button>
      </div>
      <div className="flex items-center">
        <button aria-label="Normal" className="flex h-[18px] w-[33px] items-center justify-center bg-[#dedede]">
          <Svg w={12} h={12}><path d="M.5.5h11v11H.5zM.5 4h11M.5 8h11M4 .5v11M8 .5v11" stroke="#333" /></Svg>
        </button>
        <button aria-label="Sayfa düzeni" className="ml-3">
          <Svg w={12} h={12}><path d="M.5.5h11v11H.5zM3 2.500h6v7H3zM4.500 4.500h3M4.500 6h3M4.500 7.500h3" stroke="#333" /></Svg>
        </button>
        <button aria-label="Sayfa sonu önizleme" className="ml-[22px]">
          <Svg w={12} h={12}><path d="M.5.5h11v11H.5zM4 .5v6M8 .5v6M.5 6.500H8" stroke="#333" /></Svg>
        </button>
        <button aria-label="Uzaklaştır" className="ml-[14px]"><Minus size={8} /></button>
        <div className="relative mx-1 flex w-[84px] items-center">
          <input
            type="range" aria-label="Yakınlaştırma" defaultValue={39}
            className="h-px w-full appearance-none bg-[#777] [&::-webkit-slider-thumb]:h-[10px] [&::-webkit-slider-thumb]:w-1 [&::-webkit-slider-thumb]:appearance-none [&::-webkit-slider-thumb]:bg-[#555]"
          />
          <span className="absolute left-1/2 h-1 w-px bg-[#777]" />
        </div>
        <button aria-label="Yakınlaştır"><Plus size={8} /></button>
        <span className="ml-[10px] w-[18px]">%80</span>
      </div>
    </footer>
  )
}

export default function App() {
  return (
    <div className="flex h-screen flex-col overflow-hidden bg-black py-5 font-[Open_Sans,sans-serif]">
      <main className="flex min-h-0 flex-1 flex-col bg-[#eff0f0]">
        <TitleBar />
        <MenuBar />
        <Ribbon />
        <FormulaBar />
        <Sheet />
        <SheetTabs />
        <StatusBar />
      </main>
    </div>
  )
}
